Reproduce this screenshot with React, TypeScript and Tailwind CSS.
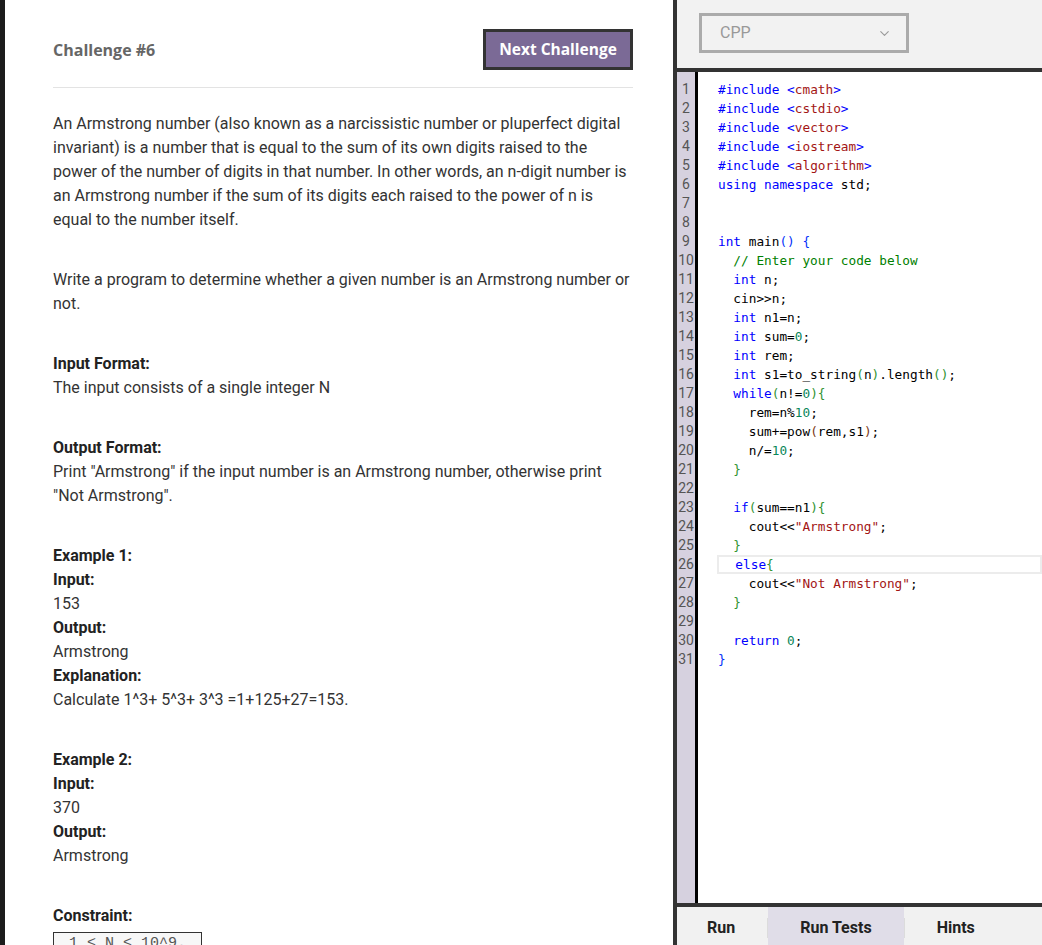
import { ChevronDown } from "lucide-react";

type Tok = [string, string?];

const KW = "text-[#0000ff]";
const STR = "text-[#a31515]";
const NUM = "text-[#098658]";
const COM = "text-[#008000]";
const B1 = "text-[#0431fa]";
const B2 = "text-[#319331]";
const B3 = "text-[#7b3814]";

const inc = (name: string): Tok[] => [["#include", KW], [" "], ["<", KW], [name, STR], [">", KW]];

const CODE: Tok[][] = [
  inc("cmath"),
  inc("cstdio"),
  inc("vector"),
  inc("iostream"),
  inc("algorithm"),
  [["using", KW], [" "], ["namespace", KW], [" std;"]],
  [],
  [],
  [["int", KW], [" main"], ["()", B1], [" "], ["{", B1]],
  [["  "], ["// Enter your code below", COM]],
  [["  "], ["int", KW], [" n;"]],
  [["  cin>>n;"]],
  [["  "], ["int", KW], [" n1=n;"]],
  [["  "], ["int", KW], [" sum="], ["0", NUM], [";"]],
  [["  "], ["int", KW], [" rem;"]],
  [["  "], ["int", KW], [" s1=to_string"], ["(", B2], ["n"], [")", B2], [".length"], ["()", B2], [";"]],
  [["  "], ["while", KW], ["(", B2], ["n!="], ["0", NUM], [")", B2], ["{", B2]],
  [["    rem=n%"], ["10", NUM], [";"]],
  [["    sum+=pow"], ["(", B3], ["rem,s1"], [")", B3], [";"]],
  [["    n/="], ["10", NUM], [";"]],
  [["  "], ["}", B2]],
  [],
  [["  "], ["if", KW], ["(", B2], ["sum==n1"], [")", B2], ["{", B2]],
  [["    cout<<"], ['"Armstrong"', STR], [";"]],
  [["  "], ["}", B2]],
  [["  "], ["else", KW], ["{", B2]],
  [["    cout<<"], ['"Not Armstrong"', STR], [";"]],
  [["  "], ["}", B2]],
  [],
  [["  "], ["return", KW], [" "], ["0", NUM], [";"]],
  [["}", B1]],
];

function Section({ children }: { children: React.ReactNode }) {
  return <div className="mb-9">{children}</div>;
}

function Label({ children }: { children: React.ReactNode }) {
  return <div className="font-bold text-[#222]">{children}</div>;
}

export default function App() {
  return (
    <div
      className="flex h-[945px] w-[1042px] overflow-hidden bg-white"
      style={{ fontFamily: "Roboto, 'Noto Sans', sans-serif" }}
    >
      <div className="w-[5px] shrink-0 bg-[#1c1c1c]" />

      {/* problem statement */}
      <div className="w-[668px] shrink-0 overflow-hidden bg-white pl-[48px] pr-[40px] pt-[29px]">
        <div
          className="flex h-[41px] items-center justify-between"
          style={{ fontFamily: "'Open Sans', Roboto, sans-serif" }}
        >
          <div className="text-[16px] font-bold text-[#666]">Challenge #6</div>
          <button className="flex h-[41px] w-[150px] items-center justify-center border-[3px] border-[#333] bg-[#7b6a96] text-[15.5px] font-bold text-white">
            Next Challenge
          </button>
        </div>
        <div className="mt-[17px] h-px bg-[#e3e3e3]" />

        <div className="mt-[24px] text-[16px] leading-[24px] text-[#333]">
          <Section>
            An Armstrong number (also known as a narcissistic number or pluperfect digital
            invariant) is a number that is equal to the sum of its own digits raised to the
            power of the number of digits in that number. In other words, an n-digit number is
            an Armstrong number if the sum of its digits each raised to the power of n is
            equal to the number itself.
          </Section>
          <Section>
            Write a program to determine whether a given number is an Armstrong number or
            not.
          </Section>
          <Section>
            <Label>Input Format:</Label>
            <div>The input consists of a single integer N</div>
          </Section>
          <Section>
            <Label>Output Format:</Label>
            <div>
              Print "Armstrong" if the input number is an Armstrong number, otherwise print
              "Not Armstrong".
            </div>
          </Section>
          <Section>
            <Label>Example 1:</Label>
            <Label>Input:</Label>
            <div>153</div>
            <Label>Output:</Label>
            <div>Armstrong</div>
            <Label>Explanation:</Label>
            <div>Calculate 1^3+ 5^3+ 3^3 =1+125+27=153.</div>
          </Section>
          <Section>
            <Label>Example 2:</Label>
            <Label>Input:</Label>
            <div>370</div>
            <Label>Output:</Label>
            <div>Armstrong</div>
          </Section>
          <div>
            <Label>Constraint:</Label>
            <div
              className="mt-[4px] inline-block border border-[#333] bg-[#f7f7f7] px-[15px] text-[15px] leading-[22px] text-[#555]"
              style={{ fontFamily: "'Liberation Mono', monospace" }}
            >
              1 ≤ N ≤ 10^9.
            </div>
          </div>
        </div>
      </div>

      <div className="w-[4px] shrink-0 bg-[#333]" />

      {/* editor */}
      <div className="flex min-w-0 flex-1 flex-col">
        <div className="h-[72px] shrink-0 border-b-4 border-[#333] bg-[#f2f2f2] pl-[22px] pt-[13px]">
          <div className="flex h-[40px] w-[210px] items-center justify-between border-[3px] border-[#ababab] pl-[18px] pr-[14px]">
            <span className="text-[16px] text-[#999]">CPP</span>
            <ChevronDown className="h-[15px] w-[15px] text-[#999]" strokeWidth={1.75} />
          </div>
        </div>

        <div className="flex min-h-0 flex-1 overflow-hidden">
          <div className="w-[18px] shrink-0 bg-[#d6d1df] pt-[8px] text-center text-[14px] leading-[19px] text-[#555]">
            {CODE.map((_, i) => (
              <div key={i}>{i + 1}</div>
            ))}
          </div>
          <div className="w-[3px] shrink-0 bg-black" />
          <div
            className="min-w-0 flex-1 pl-[20px] pt-[8px] text-[12.75px] leading-[19px] text-black"
            style={{ fontFamily: "'DejaVu Sans Mono', monospace" }}
          >
            {CODE.map((line, i) => (
              <div
                key={i}
                className={
                  i === 25
                    ? "-ml-px h-[19px] whitespace-pre border-2 border-[#ececec] pl-px leading-[15px]"
                    : "h-[19px] whitespace-pre"
                }
              >
                {line.map(([t, c], j) => (
                  <span key={j} className={c}>
                    {t}
                  </span>
                ))}
              </div>
            ))}
          </div>
        </div>

        <div className="flex h-[42px] shrink-0 border-t-4 border-[#333] bg-[#f1f1f1] pt-[3px] text-[16px] font-bold text-[#222]">
          <div className="flex items-center pl-[30px] pr-8">Run</div>
          <div className="my-auto h-[20px] w-px bg-[#dcdcdc]" />
          <div className="-mt-[3px] flex items-center bg-[#e0dde8] px-8 pt-[3px]">Run Tests</div>
          <div className="my-auto h-[20px] w-px bg-[#dcdcdc]" />
          <div className="flex items-center px-8">Hints</div>
        </div>
      </div>
    </div>
  );
}
